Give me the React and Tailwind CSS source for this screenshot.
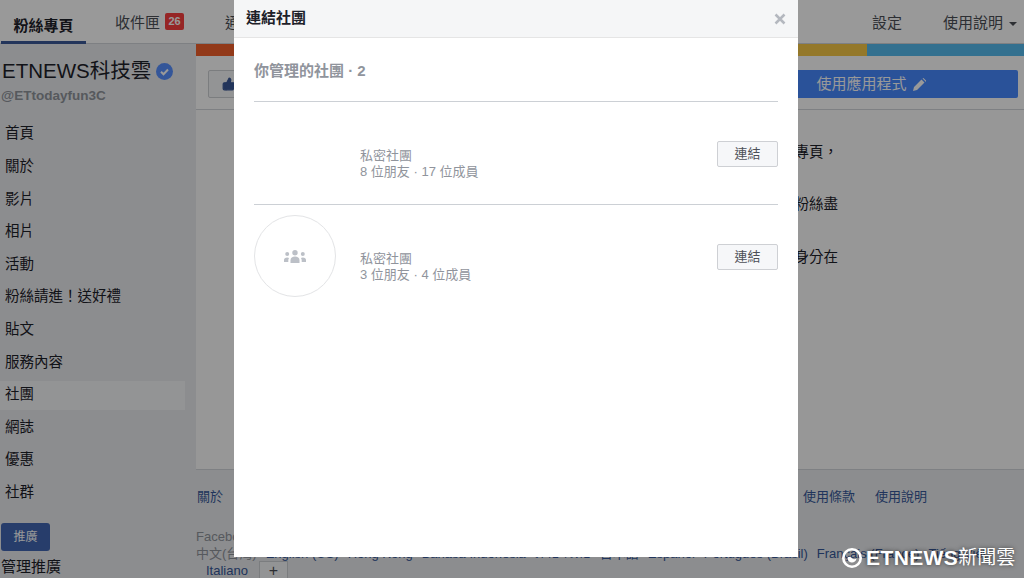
import { ThumbsUp } from "lucide-react";

const NAV = ["首頁", "關於", "影片", "相片", "活動", "粉絲請進！送好禮", "貼文", "服務內容", "社團", "網誌", "優惠", "社群"];
const LANGS = ["中文(台灣)", "English (US)", "Hong Kong", "Bahasa Indonesia", "ภาษาไทย", "日本語", "Español", "Português (Brasil)", "Français (France)", "Tiếng Việt"];

const GroupIcon = () => (
  <svg width="22" height="13" viewBox="0 0 22 13" fill="#bcc0c7">
    <circle cx="11" cy="2.700" r="2.700" />
    <path d="M6.500 13v-3c0-2 2-3.500 4.500-3.500s4.500 1.500 4.500 3.500v3z" />
    <circle cx="3.200" cy="4" r="2" />
    <path d="M0 12v-2c0-1.500 1.200-2.500 3.200-2.500 .7 0 1.400.2 1.900.5-.5.700-.8 1.400-.8 2.400V12z" />
    <circle cx="18.800" cy="4" r="2" />
    <path d="M22 12v-2c0-1.500-1.200-2.500-3.200-2.500-.7 0-1.400.2-1.900.5.500.700.800 1.400.800 2.400V12z" />
  </svg>
);

const GroupRow = ({ avatar, friends, members }) => (
  <div className="h-[103px] flex items-center border-t border-[#ccd0d5]">
    <div className="w-[82px] h-[82px] shrink-0">
      {avatar && (
        <div className="w-[82px] h-[82px] rounded-full border border-[#e3e4e6] flex items-center justify-center">
          <GroupIcon />
        </div>
      )}
    </div>
    <div className="ml-6 pt-[21px] flex-1 text-[13px] leading-[16px] text-[#90949c]">
      <div>私密社團</div>
      <div>{friends} 位朋友 · {members} 位成員</div>
    </div>
    <button className="mt-[2px] w-[61px] h-[26px] rounded-[2px] border border-[#ced0d4] bg-[#f6f7f9] text-[13px] text-[#4b4f56]">
      連結
    </button>
  </div>
);

export default function App() {
  return (
    <div className="relative w-[1024px] h-[578px] overflow-hidden bg-[#e9ebee] font-['Liberation_Sans','Noto_Sans_CJK_TC',sans-serif] text-[#1d2129]">
      {/* page behind the dialog */}
      <div className="h-[44px] pt-[3px] flex items-center bg-white border-b border-[#d3d6db] text-[15px] text-[#4b4f56]">
        <div className="ml-[1px] -mt-[3px] w-[85px] h-[44px] pt-[16px] text-center font-bold text-[15px] leading-5 text-[#1d2129] border-b-[3px] border-[#3b5998]">
          粉絲專頁
        </div>
        <div className="ml-[29px] flex items-center">
          收件匣
          <span className="ml-[5px] -mt-[3px] w-[19px] h-[17px] rounded-[2px] bg-[#fa3e3e] text-white text-[11px] font-bold leading-[17px] text-center">26</span>
        </div>
        <div className="ml-[41px]">通知</div>
        <div className="ml-auto">設定</div>
        <div className="ml-[41px] mr-[7px] flex items-center">
          使用說明
          <span className="ml-[6px] mt-[2px] border-x-[4px] border-t-[4px] border-x-transparent border-t-[#4b4f56]" />
        </div>
      </div>

      <div className="flex">
        <aside className="w-[196px] shrink-0 pt-[12px]">
          <div className="flex items-center pl-[2px] text-[20.500px] leading-[30px]">
            ETNEWS科技雲
            <svg className="ml-[5px]" width="17" height="17" viewBox="0 0 17 17">
              <circle cx="8.500" cy="8.500" r="8.500" fill="#5890ff" />
              <path d="M5 8.800l2.500 2.500L12 6.500" fill="none" stroke="#fff" strokeWidth="2" />
            </svg>
          </div>
          <div className="pl-[1px] text-[13.500px] leading-[20px] font-bold text-[#90949c]">@ETtodayfun3C</div>
          <nav className="mt-[12px] w-[185px]">
            {NAV.map((item) => (
              <div key={item} className="h-[32.600px] flex items-center text-[14.500px]">
                <div className={`w-full h-[29px] pl-[5px] flex items-center ${item === "社團" ? "bg-[#f6f7f9]" : ""}`}>
                  {item}
                </div>
              </div>
            ))}
          </nav>
          <button className="mt-[14px] ml-[1px] block w-[49px] h-[28px] rounded-[3px] bg-[#4267b2] text-white text-xs">
            推廣
          </button>
          <div className="mt-[6px] pl-[1px] text-[15px] leading-5">管理推廣</div>
        </aside>

        <main className="flex-1 min-w-0">
          <div className="h-[12px] flex">
            <div className="flex-1 bg-[#f4602a]" />
            <div className="w-[300px] bg-[#f7c846]" />
            <div className="w-[157px] bg-[#55bbee]" />
          </div>
          <div className="h-[54px] pt-[2px] bg-white border-b border-[#d3d6db] flex items-center pl-3 pr-[6px]">
            <div className="w-[60px] h-[28px] rounded-[2px] border border-[#ced0d4] bg-[#f6f7f9] pl-[13px] flex items-center">
              <ThumbsUp size={14} className="text-[#3b5998] fill-[#3b5998]" />
            </div>
            <button className="ml-auto w-[294px] h-[28px] pt-[2px] rounded-[2px] bg-[#4689ff] text-white text-[15px] flex items-center justify-center gap-[6px]">
              使用應用程式
              <svg width="13" height="13" viewBox="0 0 13 13" fill="#fff">
                <path d="M0 13l1-4 7.500-7.500 3 3L4 12zM9.500.5l1-.5 3 3-.5 1z" />
              </svg>
            </button>
          </div>
          <div className="h-[360px] bg-[#fcfcfc] border-b border-[#d3d6db] pt-[16px] pr-[186px] flex flex-col items-end text-[14.500px] leading-[53px]">
            <div>歡迎來到粉絲專頁，</div>
            <div className="-mt-[1px]">分享給你的粉絲盡</div>
            <div>無論你身分在</div>
          </div>
          <div className="h-[54px] flex items-center pl-px text-[13px] text-[#365899]">
            <span>關於</span>
            <span className="ml-auto">使用條款</span>
            <span className="ml-5 mr-[97px]">使用說明</span>
          </div>
          <div className="mt-[4px] text-[13px] leading-[17px] text-[#90949c]">Facebook © 2018</div>
          <div className="flex gap-[9px] whitespace-nowrap text-[13px] leading-[17px] text-[#365899]">
            {LANGS.map((lang, i) => (
              <span key={lang} className={i === 0 ? "text-[#90949c]" : ""}>{lang}</span>
            ))}
          </div>
          <div className="pl-[10px] flex items-start text-[13px] leading-[17px] text-[#365899]">
            <span>Italiano</span>
            <span className="ml-[11px] -mt-[1px] w-[29px] h-[17px] border-x border-t border-[#ced0d4] bg-[#f6f7f9] text-center text-[#4b4f56] text-[16px] leading-[17px]">+</span>
          </div>
        </main>
      </div>

      <div className="absolute inset-0 bg-black/40" />

      {/* dialog */}
      <div className="absolute left-[234px] top-0 w-[564px] h-[557px] bg-white">
        <div className="h-[38px] bg-[#f5f6f7] border-b border-[#e5e5e5] pl-3 pr-3 flex items-center justify-between">
          <span className="text-[15px] font-bold">連結社團</span>
          <svg width="12" height="12" viewBox="0 0 12 12" stroke="#b4b8bf" strokeWidth="2.500">
            <path d="M1.500 1.500l9 9M10.500 1.500l-9 9" />
          </svg>
        </div>
        <div className="px-5">
          <div className="h-[63px] pt-[23px] text-[15px] leading-5 font-bold text-[#90949c]">你管理的社團 · 2</div>
          <GroupRow friends={8} members={17} />
          <GroupRow avatar friends={3} members={4} />
        </div>
      </div>

      {/* watermark */}
      <div className="absolute left-[842px] top-[546px] flex items-center text-white text-[21px] leading-6 [text-shadow:0_0_4px_rgba(0,0,0,0.6)]">
        <svg width="20" height="20" viewBox="0 0 20 20" fill="none" stroke="#fff">
          <circle cx="10" cy="10" r="8.700" strokeWidth="2.600" />
          <path d="M5.500 9.500a4.500 4.500 0 0 0 9 1c-1.500 1.200-3.500 1-4.500-.2-1-1.200-2.600-1.800-4.500-.8z" fill="#fff" stroke="none" />
        </svg>
        <span className="ml-[4px] font-bold tracking-[0.4px]">ETNEWS</span>
        <span className="text-[19px]">新聞雲</span>
      </div>
    </div>
  );
}
